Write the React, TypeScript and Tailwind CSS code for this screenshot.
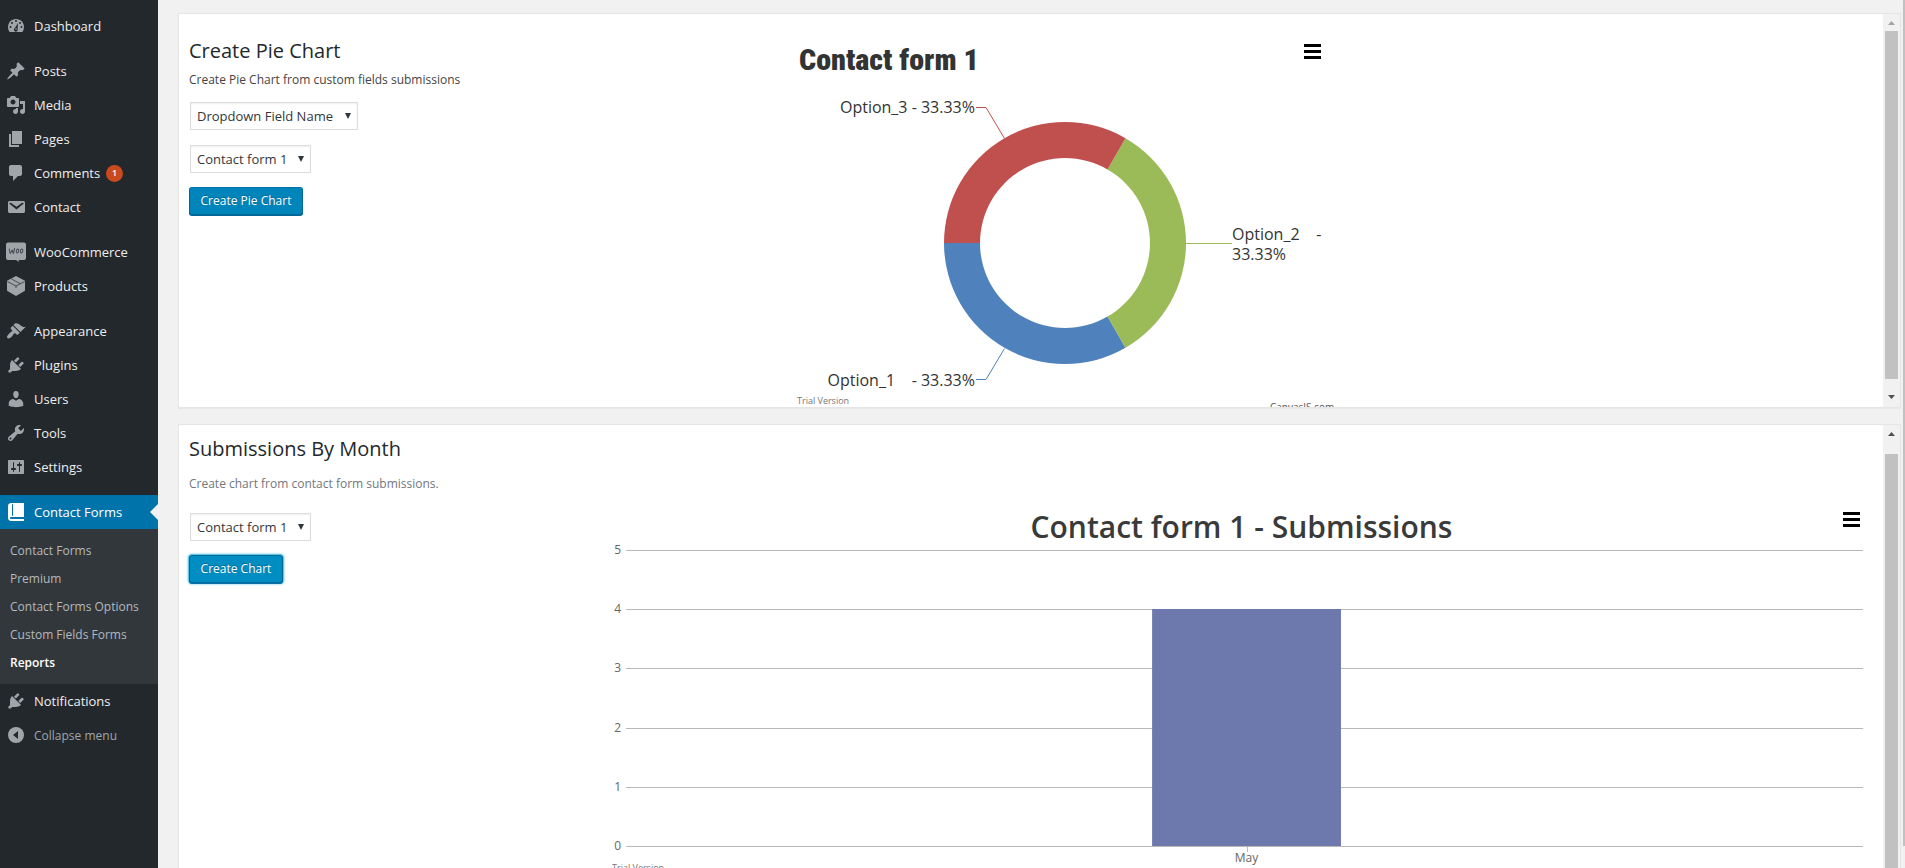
import type { ReactNode } from "react";

const icons = {
  posts:
    "M10.44 3.02l1.82-1.82 6.36 6.35-1.83 1.82c-1.05-.68-2.48-.57-3.41.36l-.75.75c-.92.93-1.04 2.35-.35 3.41l-1.83 1.82-2.41-2.41-2.8 2.79c-.42.42-3.38 2.71-3.8 2.29s1.86-3.39 2.28-3.81l2.79-2.79L4.1 9.36l1.83-1.82c1.05.69 2.48.57 3.4-.36l.75-.75c.93-.92 1.05-2.35.36-3.41z",
  media:
    "M13 11V4c0-.55-.45-1-1-1h-1.67L9 1H5L3.67 3H2c-.55 0-1 .45-1 1v7c0 .55.45 1 1 1h10c.55 0 1-.45 1-1zM7 4.5c1.38 0 2.5 1.12 2.5 2.5S8.38 9.5 7 9.5 4.5 8.38 4.5 7 5.62 4.5 7 4.5zM14 6h5v10.5c0 1.38-1.12 2.5-2.5 2.5S14 17.88 14 16.5s1.12-2.5 2.5-2.5c.17 0 .34.02.5.05V9h-3V6zm-4 8.05V13h2v3.5c0 1.38-1.12 2.5-2.5 2.5S7 17.88 7 16.5 8.12 14 9.5 14c.17 0 .34.02.5.05z",
  pages: "M6 15V2h10v13H6zm-1 1h8v2H3V5h2v11z",
  comments:
    "M5 2h9c1.1 0 2 .9 2 2v7c0 1.1-.9 2-2 2h-2l-5 5v-5H5c-1.1 0-2-.9-2-2V4c0-1.1.9-2 2-2z",
  email:
    "M3.87 4h13.25C18.37 4 19 4.59 19 5.79v8.42c0 1.19-.63 1.79-1.88 1.79H3.87c-1.25 0-1.88-.6-1.88-1.79V5.79c0-1.2.63-1.79 1.88-1.79zm6.62 8.6l6.74-5.53c.24-.2.43-.66.13-1.07-.29-.41-.82-.42-1.17-.17l-5.7 3.86L4.8 5.83c-.35-.25-.88-.24-1.17.17-.3.41-.11.87.13 1.07z",
  appearance:
    "M14.48 11.06L7.41 3.99l1.5-1.5c.5-.56 2.3-.47 3.51.32 1.21.8 1.43 1.28 2.91 2.1 1.18.64 2.45 1.26 4.45.85zm-.71.71L6.7 4.7 4.93 6.47c-.39.39-.39 1.02 0 1.41l1.06 1.06c.39.39.39 1.03 0 1.42-.6.6-1.43 1.11-2.21 1.69-.35.26-.7.53-1.01.84C1.43 14.23.4 16.08 1.4 17.07c.99 1 2.84-.03 4.18-1.36.31-.31.58-.66.85-1.02.57-.78 1.08-1.61 1.69-2.21.39-.39 1.02-.39 1.41 0l1.06 1.06c.39.39 1.02.39 1.41 0z",
  plugins:
    "M13.11 4.36L9.87 7.6 8 5.73l3.24-3.24c.35-.34 1.05-.2 1.56.32.52.51.66 1.21.31 1.55zm-8 1.77l.91-1.12 9.01 9.01-1.19.84c-.71.71-2.63 1.16-3.82 1.16H6.14L4.9 17.26c-.59.59-1.54.59-2.12 0-.59-.58-.59-1.53 0-2.12l1.24-1.24v-3.88c0-1.13.4-3.19 1.09-3.89zm7.26 3.97l3.24-3.24c.34-.35 1.04-.21 1.55.31.52.51.66 1.21.31 1.55l-3.24 3.25z",
  users:
    "M10 9.25c-2.27 0-2.73-3.44-2.73-3.44C7 4.02 7.82 2 9.97 2c2.16 0 2.98 2.02 2.71 3.81 0 0-.41 3.44-2.68 3.44zm0 2.57L12.72 10c2.39 0 4.52 2.33 4.52 4.53v2.49s-3.65 1.13-7.24 1.13c-3.65 0-7.24-1.13-7.24-1.13v-2.49c0-2.25 1.94-4.48 4.47-4.48z",
  tools:
    "M16.68 9.77c-1.34 1.34-3.3 1.67-4.95.99l-5.41 6.52c-.99.99-2.59.99-3.58 0s-.99-2.59 0-3.57l6.52-5.42c-.68-1.65-.35-3.61.99-4.95 1.28-1.28 3.12-1.62 4.72-1.06l-2.89 2.89 2.82 2.82 2.86-2.87c.53 1.58.18 3.39-1.08 4.65zM3.81 16.21c.4.39 1.04.39 1.43 0 .4-.4.4-1.04 0-1.43-.39-.4-1.03-.4-1.43 0-.39.39-.39 1.03 0 1.43z",
  settings:
    "M18 16V4c0-.55-.45-1-1-1H3c-.55 0-1 .45-1 1v12c0 .55.45 1 1 1h14c.55 0 1-.45 1-1zM8 11h1c.55 0 1 .45 1 1s-.45 1-1 1H8v1.5c0 .28-.22.5-.5.5s-.5-.22-.5-.5V13H6c-.55 0-1-.45-1-1s.45-1 1-1h1V5.5c0-.28.22-.5.5-.5s.5.22.5.5V11zm5-2h-1c-.55 0-1-.45-1-1s.45-1 1-1h1V5.5c0-.28.22-.5.5-.5s.5.22.5.5V7h1c.55 0 1 .45 1 1s-.45 1-1 1h-1v5.5c0 .28-.22.5-.5.5s-.5-.22-.5-.5V9z",
  book:
    "M5 17h13v2H5c-1.66 0-3-1.34-3-3V4c0-1.66 1.34-3 3-3h13v14H5c-.55 0-1 .45-1 1s.45 1 1 1zm2-3.5v-11c0-.28-.22-.5-.5-.5s-.5.22-.5.5v11c0 .28.22.5.5.5s.5-.22.5-.5z",
};

function Glyph({ d }: { d: string }) {
  return (
    <svg viewBox="0 0 20 20" className="size-5" fill="currentColor" fillRule="evenodd" aria-hidden="true">
      <path d={d} />
    </svg>
  );
}

function DashboardGlyph() {
  const dots = [
    [10, 5],
    [6, 7],
    [14, 7],
    [4.5, 11],
    [15.5, 11],
  ];
  return (
    <svg viewBox="0 0 20 20" className="size-5" aria-hidden="true">
      <path fill="currentColor" d="M3.76 16h12.48c1.1-1.37 1.76-3.11 1.76-5 0-4.42-3.58-8-8-8s-8 3.58-8 8c0 1.89.66 3.63 1.76 5z" />
      {dots.map(([x, y]) => (
        <circle key={`${x}-${y}`} cx={x} cy={y} r="1" fill="#23282d" />
      ))}
      <path fill="#23282d" d="M12 7l-.4 6.2a1.9 1.9 0 1 1-2.7-1.1z" />
      <circle cx="10" cy="13" r=".8" fill="currentColor" />
    </svg>
  );
}

function WooGlyph() {
  return (
    <svg viewBox="0 0 20 20" className="size-5" aria-hidden="true">
      <path
        fill="currentColor"
        d="M2 .5h16a2 2 0 0 1 2 2V16a2 2 0 0 1-2 2h-5.500l.5 2-3-2H2a2 2 0 0 1-2-2V2.500a2 2 0 0 1 2-2z"
      />
      <g fill="none" stroke="#4a5057" strokeWidth="1.100" strokeLinecap="round" strokeLinejoin="round">
        <path d="M3.200 7l1 4.500L6.200 8l1.200 3.500L8.600 6.500" />
        <ellipse cx="11.500" cy="9" rx="1.200" ry="1.900" transform="rotate(12 11.500 9)" />
        <ellipse cx="15.600" cy="9" rx="1.200" ry="1.900" transform="rotate(12 15.600 9)" />
      </g>
    </svg>
  );
}

function BoxGlyph() {
  return (
    <svg viewBox="0 0 20 20" className="size-5" aria-hidden="true">
      <path fill="currentColor" d="M10 0l9 4.700v10.100L10 20l-9-5.200V4.700z" />
      <path fill="none" stroke="#23282d" strokeWidth=".7" d="M1.500 5.600L10 10l8.500-4.400M10 10v2M5.500 3l8.700 4.700" />
    </svg>
  );
}

function CollapseGlyph() {
  return (
    <svg viewBox="0 0 20 20" className="size-5" aria-hidden="true">
      <circle cx="10" cy="10" r="8" fill="currentColor" />
      <path fill="#23282d" d="M12 6v8l-5-4z" />
    </svg>
  );
}

type Item = { label: string; icon: ReactNode; badge?: string };

const groups: Item[][] = [
  [{ label: "Dashboard", icon: <DashboardGlyph /> }],
  [
    { label: "Posts", icon: <Glyph d={icons.posts} /> },
    { label: "Media", icon: <Glyph d={icons.media} /> },
    { label: "Pages", icon: <Glyph d={icons.pages} /> },
    { label: "Comments", icon: <Glyph d={icons.comments} />, badge: "1" },
    { label: "Contact", icon: <Glyph d={icons.email} /> },
  ],
  [
    { label: "WooCommerce", icon: <WooGlyph /> },
    { label: "Products", icon: <BoxGlyph /> },
  ],
  [
    { label: "Appearance", icon: <Glyph d={icons.appearance} /> },
    { label: "Plugins", icon: <Glyph d={icons.plugins} /> },
    { label: "Users", icon: <Glyph d={icons.users} /> },
    { label: "Tools", icon: <Glyph d={icons.tools} /> },
    { label: "Settings", icon: <Glyph d={icons.settings} /> },
  ],
];

const submenu = ["Contact Forms", "Premium", "Contact Forms Options", "Custom Fields Forms", "Reports"];

function MenuLink({ label, icon, badge }: Item) {
  return (
    <a href="#" className="flex h-[34px] items-center gap-2 pl-1.5 text-[13px] text-[#eeeeee]">
      <span className="text-[#a0a5aa]">{icon}</span>
      <span className="pt-0.5">{label}</span>
      {badge && (
        <span className="-ml-0.5 flex size-[17px] items-center justify-center rounded-full bg-[#ca4a1f] text-[9px] font-semibold text-white">
          {badge}
        </span>
      )}
    </a>
  );
}

function Sidebar() {
  return (
    <nav aria-label="Main menu" className="flex w-[158px] shrink-0 flex-col bg-[#23282d] pt-[9px]">
      <div className="flex flex-col gap-[11px]">
        {groups.map((group) => (
          <div key={group[0].label}>
            {group.map((item) => (
              <MenuLink key={item.label} {...item} />
            ))}
          </div>
        ))}
        <div>
          <a href="#" className="relative flex h-[34px] items-center gap-2 bg-[#0073aa] pl-1.5 text-[13px] text-white">
            <Glyph d={icons.book} />
            <span className="pt-0.5">Contact Forms</span>
            <span className="absolute top-[9px] right-0 border-y-8 border-r-8 border-y-transparent border-r-[#f1f1f1]" />
          </a>
          <ul className="bg-[#32373c] pt-2 pb-[7px]">
            {submenu.map((label) => (
              <li key={label}>
                <a
                  href="#"
                  className={
                    label === "Reports"
                      ? "flex h-7 items-center pl-2.5 text-xs font-semibold text-white"
                      : "flex h-7 items-center pl-2.5 text-xs text-[#b4b9be]"
                  }
                >
                  {label}
                </a>
              </li>
            ))}
          </ul>
          <MenuLink label="Notifications" icon={<Glyph d={icons.plugins} />} />
          <button type="button" className="flex h-[34px] items-center gap-2 pl-1.5 text-xs text-[#a0a5aa]">
            <CollapseGlyph />
            <span className="pt-0.5">Collapse menu</span>
          </button>
        </div>
      </div>
    </nav>
  );
}

function Select({ label, value, width }: { label: string; value: string; width: string }) {
  return (
    <div className={`relative ml-px h-7 ${width}`}>
      <select
        aria-label={label}
        className="h-7 w-full appearance-none border border-[#dddddd] bg-white pt-0.5 pl-1.5 text-[13px] text-[#32373c] shadow-[inset_0_1px_2px_rgba(0,0,0,0.07)]"
      >
        <option>{value}</option>
      </select>
      <svg viewBox="0 0 6 6" className="pointer-events-none absolute top-[11px] right-[7px] size-1.5" aria-hidden="true">
        <path d="M0 0h6L3 6z" fill="#32373c" />
      </svg>
    </div>
  );
}

function MenuButton({ className }: { className: string }) {
  return (
    <button type="button" aria-label="Export chart" className={`absolute ${className}`}>
      <svg viewBox="0 0 17 15" className="h-[15px] w-[17px]" aria-hidden="true">
        <path d="M0 0h17v3H0zM0 6h17v3H0zM0 12h17v3H0z" />
      </svg>
    </button>
  );
}

function ScrollTrack({ top, children }: { top: string; children: ReactNode }) {
  return (
    <div className="flex w-[17px] shrink-0 flex-col items-center bg-[#f1f1f1]" aria-hidden="true">
      <span className="flex h-[17px] shrink-0 items-center">
        <svg viewBox="0 0 7 4" className={`h-1 w-[7px] ${top}`}>
          <path d="M3.500 0L7 4H0z" fill="currentColor" />
        </svg>
      </span>
      {children}
    </div>
  );
}

function PieChart() {
  return (
    <div className="relative w-[545px] shrink-0">
      <svg width="545" height="400" fontFamily='"Open Sans", "Noto Sans", sans-serif' fill="#333333" role="img" aria-label="Contact form 1 pie chart">
        <text x="4" y="56" fontFamily='Impact, "Roboto Condensed", sans-serif' fontSize="30" fontWeight="900">
          Contact form 1
        </text>
        <path fill="#4f81bc" d="M149 229A121 121 0 0 0 330.500 333.800L312.500 302.600A85 85 0 0 1 185 229z" />
        <path fill="#9bbb58" d="M330.500 333.800A121 121 0 0 0 330.500 124.200L312.500 155.400A85 85 0 0 1 312.500 302.600z" />
        <path fill="#c0504e" d="M330.500 124.200A121 121 0 0 0 149 229H185A85 85 0 0 1 312.500 155.400z" />
        <path fill="none" stroke="#c0504e" d="M181 93.500h10l18.500 31" />
        <path fill="none" stroke="#4f81bc" d="M181 365.500h10l18.500-31" />
        <path fill="none" stroke="#9bbb58" d="M391 229.500h46" />
        <text x="180" y="99" fontSize="16" textAnchor="end">
          Option_3 - 33.33%
        </text>
        <text x="180" y="372" fontSize="16" textAnchor="end" className="whitespace-pre">
          {"Option_1    - 33.33%"}
        </text>
        <text x="437" y="226" fontSize="16" className="whitespace-pre">
          {"Option_2    -"}
        </text>
        <text x="437" y="246" fontSize="16">
          33.33%
        </text>
        <text x="2" y="390" fontSize="9" fill="#777777">
          Trial Version
        </text>
        <text x="475" y="397" fontSize="10" fill="#555555">
          CanvasJS.com
        </text>
      </svg>
      <MenuButton className="top-[30px] right-[19px]" />
    </div>
  );
}

const ticks = [
  { value: 5, y: 50 },
  { value: 4, y: 109 },
  { value: 3, y: 168 },
  { value: 2, y: 228 },
  { value: 1, y: 287 },
  { value: 0, y: 346 },
];

function BarChart() {
  return (
    <div className="relative mt-[75px] mr-3 min-w-0 flex-1">
      <svg width="100%" height="380" fontFamily='"Open Sans", "Noto Sans", sans-serif' fill="#666666" role="img" aria-label="Contact form 1 submissions by month">
        <text x="50%" y="38" fontSize="30" fontWeight="600" fill="#3a3a3a" textAnchor="middle">
          Contact form 1 - Submissions
        </text>
        {ticks.map(({ value, y }) => (
          <g key={value}>
            <rect x="14" y={y} width="98.260%" height="1" fill="#b8b8b8" />
            <text x="9" y={y + 4} fontSize="12" textAnchor="end">
              {value}
            </text>
          </g>
        ))}
        <rect x="42.900%" y="109" width="15%" height="237" fill="#6d78ad" />
        <rect x="50.400%" y="347" width="1" height="5" fill="#bbbbbb" shapeRendering="crispEdges" />
        <text x="50.400%" y="362" fontSize="12" textAnchor="middle">
          May
        </text>
        <text x="0" y="371" fontSize="9" fill="#777777">
          Trial Version
        </text>
      </svg>
      <MenuButton className="top-3 right-[11px]" />
    </div>
  );
}

export default function App() {
  return (
    <div className="flex h-screen overflow-hidden bg-[#f1f1f1] font-['Open_Sans','Noto_Sans',sans-serif]">
      <Sidebar />
      <main className="flex min-w-0 flex-1 flex-col gap-4 pt-[13px] pr-0.5 pl-5">
        <section className="flex h-[395px] shrink-0 overflow-hidden border border-[#e5e5e5] bg-white shadow-[0_1px_1px_rgba(0,0,0,0.04)]">
          <div className="w-[616px] shrink-0 pt-[23px] pl-2.5">
            <h2 className="text-xl leading-7 text-[#23282d]">Create Pie Chart</h2>
            <p className="mt-[5px] text-xs leading-5 text-[#444444]">Create Pie Chart from custom fields submissions</p>
            <form className="flex flex-col items-start pt-3">
              <Select label="Field" value="Dropdown Field Name" width="w-[168px]" />
              <div className="pt-[15px]">
                <Select label="Form for pie chart" value="Contact form 1" width="w-[121px]" />
              </div>
              <button
                type="button"
                className="mt-3.5 h-7 w-[114px] rounded-[3px] border border-[#006799] border-t-[#0073aa] bg-[#0085ba] text-xs text-white shadow-[0_1px_0_#006799] [text-shadow:0_-1px_1px_#006799]"
              >
                Create Pie Chart
              </button>
            </form>
          </div>
          <PieChart />
          <div className="flex-1" />
          <ScrollTrack top="text-[#a3a3a3]">
            <span className="w-[13px] flex-1 bg-[#c1c1c1]" />
            <span className="flex h-7 items-end pb-2">
              <svg viewBox="0 0 7 4" className="h-1 w-[7px]">
                <path d="M0 0h7L3.500 4z" fill="#505050" />
              </svg>
            </span>
          </ScrollTrack>
        </section>

        <section className="flex min-h-0 flex-1 overflow-hidden border border-b-0 border-[#e5e5e5] bg-white">
          <div className="w-[433px] shrink-0 pt-2.5 pl-2.5">
            <h2 className="text-xl leading-7 text-[#23282d]">Submissions By Month</h2>
            <p className="mt-[11px] text-xs leading-5 text-[#72777c]">Create chart from contact form submissions.</p>
            <form className="flex flex-col items-start pt-[19px]">
              <Select label="Form for monthly chart" value="Contact form 1" width="w-[121px]" />
              <button
                type="button"
                className="mt-3.5 h-7 w-[94px] rounded-[3px] border border-[#006799] bg-[#008ec2] text-xs text-white shadow-[0_1px_0_#0073aa,0_0_2px_1px_#33b3db] [text-shadow:0_-1px_1px_#006799]"
              >
                Create Chart
              </button>
            </form>
          </div>
          <BarChart />
          <ScrollTrack top="text-[#505050]">
            <span className="mt-3 w-[13px] flex-1 bg-[#c1c1c1]" />
          </ScrollTrack>
        </section>
      </main>
      <div className="w-0.5 shrink-0 pb-[22px]" aria-hidden="true">
        <div className="h-full bg-[#c1c1c1]" />
      </div>
    </div>
  );
}
